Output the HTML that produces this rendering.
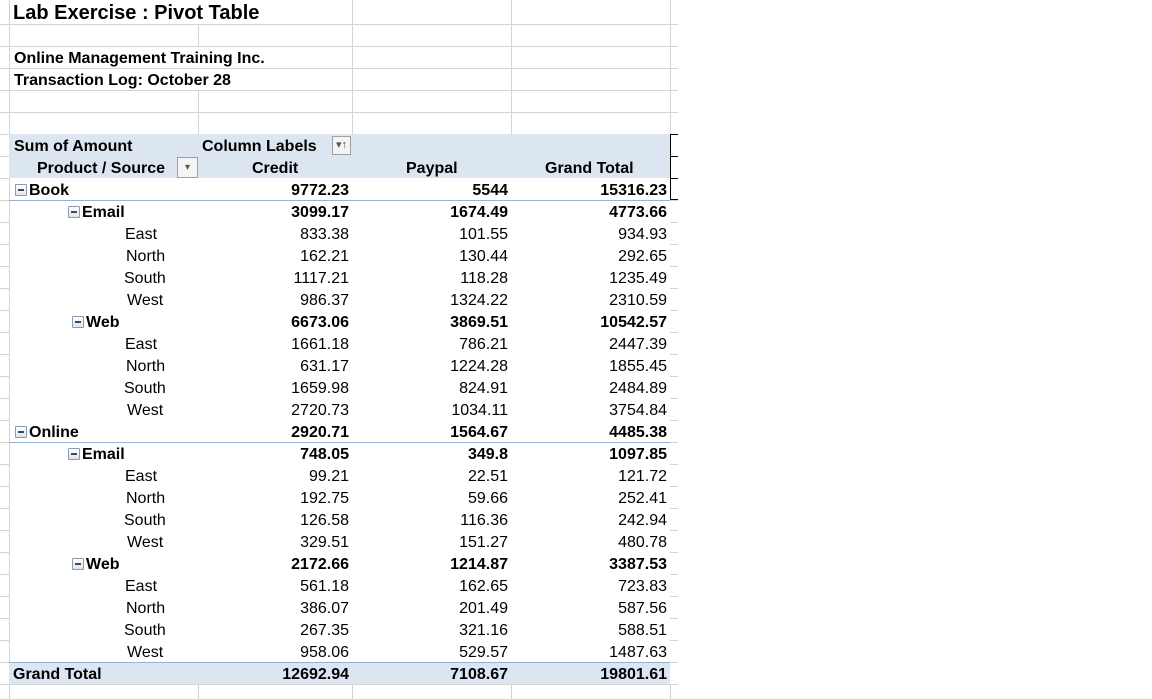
<!DOCTYPE html>
<html><head><meta charset="utf-8"><style>
body{margin:0;width:1152px;height:699px;overflow:hidden;background:#fff;font-family:"Liberation Sans",Arial,sans-serif;font-size:16px;color:#000;position:relative}
.a{position:absolute}
.hl{position:absolute;height:1px;background:#d4d4d4}
.vl{position:absolute;width:1px;background:#d4d4d4}
.r{position:absolute;left:9px;width:661px;height:22px;line-height:22px}
.r span{position:absolute;white-space:nowrap;top:2px}
.c1{right:321px}.c2{right:162px}.c3{right:3px}
.b{font-weight:bold}
.ic{display:inline-block;width:10px;height:10px;border:1px solid #8a9bb0;background:linear-gradient(#fff,#dfe5ec);position:relative;vertical-align:-1px;margin-right:2px;border-radius:1px}
.ic:after{content:"";position:absolute;left:2px;top:4px;width:6px;height:2px;background:#3a4a5e}
</style></head><body>
<div class="vl" style="left:9px;top:0;height:699px"></div>
<div class="a" style="left:0;top:0;width:9px;height:699px;background:repeating-linear-gradient(#fff 0 21px,#d4d4d4 21px 22px);background-position:0 3px"></div>
<div class="a" style="left:670px;top:0;width:8px;height:699px;background:repeating-linear-gradient(#fff 0 21px,#d4d4d4 21px 22px);background-position:0 3px"></div>
<div class="hl" style="left:9px;width:669px;top:24px"></div>
<div class="hl" style="left:9px;width:669px;top:46px"></div>
<div class="hl" style="left:9px;width:669px;top:68px"></div>
<div class="hl" style="left:9px;width:669px;top:90px"></div>
<div class="hl" style="left:9px;width:669px;top:112px"></div>
<div class="hl" style="left:9px;width:669px;top:134px"></div>
<div class="hl" style="left:9px;width:669px;top:684px"></div>
<div class="vl" style="left:352px;top:0;height:134px"></div>
<div class="vl" style="left:511px;top:0;height:134px"></div>
<div class="vl" style="left:670px;top:0;height:134px"></div>
<div class="vl" style="left:198px;top:24px;height:22px"></div>
<div class="vl" style="left:198px;top:90px;height:44px"></div>
<div class="vl" style="left:198px;top:684px;height:15px"></div>
<div class="vl" style="left:352px;top:684px;height:15px"></div>
<div class="vl" style="left:511px;top:684px;height:15px"></div>
<div class="vl" style="left:670px;top:684px;height:15px"></div>
<div class="a" style="left:670px;top:134px;width:1px;height:66px;background:#000"></div>
<div class="a" style="left:670px;top:134px;width:8px;height:1px;background:#000"></div>
<div class="a" style="left:670px;top:156px;width:8px;height:1px;background:#000"></div>
<div class="a" style="left:670px;top:178px;width:8px;height:1px;background:#000"></div>
<div class="a" style="left:670px;top:199px;width:8px;height:1px;background:#000"></div>
<div class="a b" style="left:13px;top:1px;height:24px;line-height:24px;font-size:20px">Lab Exercise : Pivot Table</div>
<div class="a b" style="left:14px;top:48px;line-height:22px">Online Management Training Inc.</div>
<div class="a b" style="left:14px;top:70px;line-height:22px">Transaction Log: October 28</div>
<div class="a" style="left:9px;top:134px;width:661px;height:44px;background:#dce6f1"></div>
<div class="a" style="left:9px;top:662px;width:661px;height:22px;background:#dce6f1"></div>
<div class="r b" style="top:134px"><span style="left:5px">Sum of Amount</span><span style="left:193px">Column Labels</span></div>
<div class="a" style="left:332px;top:136px;width:17px;height:17px;border:1px solid #a0a0a0;background:#f4f4f4;font-size:11px;line-height:17px;text-align:center;color:#555">&#9662;&#8593;</div>
<div class="r b" style="top:156px"><span style="left:28px">Product / Source</span><span style="left:243px">Credit</span><span style="left:397px">Paypal</span><span style="left:536px">Grand Total</span></div>
<div class="a" style="left:177px;top:157px;width:19px;height:19px;border:1px solid #a0a0a0;background:#f4f4f4;font-size:10px;line-height:19px;text-align:center;color:#555">&#9662;</div>
<div class="r b" style="top:178px"><span style="left:6px"><i class="ic"></i>Book</span><span class="c1">9772.23</span><span class="c2">5544</span><span class="c3">15316.23</span></div>
<div class="a" style="left:9px;top:200px;width:661px;height:1px;background:#95b3d7"></div>
<div class="r b" style="top:200px"><span style="left:59px"><i class="ic"></i>Email</span><span class="c1">3099.17</span><span class="c2">1674.49</span><span class="c3">4773.66</span></div>
<div class="r" style="top:222px"><span style="left:116px">East</span><span class="c1">833.38</span><span class="c2">101.55</span><span class="c3">934.93</span></div>
<div class="r" style="top:244px"><span style="left:117px">North</span><span class="c1">162.21</span><span class="c2">130.44</span><span class="c3">292.65</span></div>
<div class="r" style="top:266px"><span style="left:115px">South</span><span class="c1">1117.21</span><span class="c2">118.28</span><span class="c3">1235.49</span></div>
<div class="r" style="top:288px"><span style="left:118px">West</span><span class="c1">986.37</span><span class="c2">1324.22</span><span class="c3">2310.59</span></div>
<div class="r b" style="top:310px"><span style="left:63px"><i class="ic"></i>Web</span><span class="c1">6673.06</span><span class="c2">3869.51</span><span class="c3">10542.57</span></div>
<div class="r" style="top:332px"><span style="left:116px">East</span><span class="c1">1661.18</span><span class="c2">786.21</span><span class="c3">2447.39</span></div>
<div class="r" style="top:354px"><span style="left:117px">North</span><span class="c1">631.17</span><span class="c2">1224.28</span><span class="c3">1855.45</span></div>
<div class="r" style="top:376px"><span style="left:115px">South</span><span class="c1">1659.98</span><span class="c2">824.91</span><span class="c3">2484.89</span></div>
<div class="r" style="top:398px"><span style="left:118px">West</span><span class="c1">2720.73</span><span class="c2">1034.11</span><span class="c3">3754.84</span></div>
<div class="r b" style="top:420px"><span style="left:6px"><i class="ic"></i>Online</span><span class="c1">2920.71</span><span class="c2">1564.67</span><span class="c3">4485.38</span></div>
<div class="a" style="left:9px;top:442px;width:661px;height:1px;background:#95b3d7"></div>
<div class="r b" style="top:442px"><span style="left:59px"><i class="ic"></i>Email</span><span class="c1">748.05</span><span class="c2">349.8</span><span class="c3">1097.85</span></div>
<div class="r" style="top:464px"><span style="left:116px">East</span><span class="c1">99.21</span><span class="c2">22.51</span><span class="c3">121.72</span></div>
<div class="r" style="top:486px"><span style="left:117px">North</span><span class="c1">192.75</span><span class="c2">59.66</span><span class="c3">252.41</span></div>
<div class="r" style="top:508px"><span style="left:115px">South</span><span class="c1">126.58</span><span class="c2">116.36</span><span class="c3">242.94</span></div>
<div class="r" style="top:530px"><span style="left:118px">West</span><span class="c1">329.51</span><span class="c2">151.27</span><span class="c3">480.78</span></div>
<div class="r b" style="top:552px"><span style="left:63px"><i class="ic"></i>Web</span><span class="c1">2172.66</span><span class="c2">1214.87</span><span class="c3">3387.53</span></div>
<div class="r" style="top:574px"><span style="left:116px">East</span><span class="c1">561.18</span><span class="c2">162.65</span><span class="c3">723.83</span></div>
<div class="r" style="top:596px"><span style="left:117px">North</span><span class="c1">386.07</span><span class="c2">201.49</span><span class="c3">587.56</span></div>
<div class="r" style="top:618px"><span style="left:115px">South</span><span class="c1">267.35</span><span class="c2">321.16</span><span class="c3">588.51</span></div>
<div class="r" style="top:640px"><span style="left:118px">West</span><span class="c1">958.06</span><span class="c2">529.57</span><span class="c3">1487.63</span></div>
<div class="a" style="left:9px;top:662px;width:661px;height:1px;background:#95b3d7"></div>
<div class="r b" style="top:662px"><span style="left:4px">Grand Total</span><span class="c1">12692.94</span><span class="c2">7108.67</span><span class="c3">19801.61</span></div>
</body></html>
